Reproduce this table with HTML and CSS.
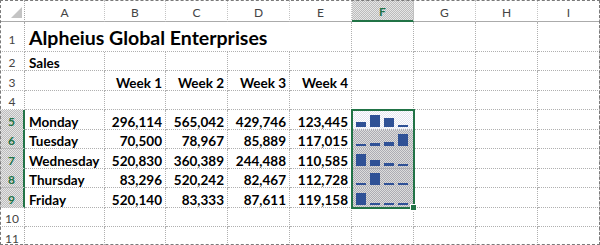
FILE: index.html
```html
<!DOCTYPE html>
<html lang="en">
<head>
  <meta charset="UTF-8">
  <title>Sales - Sparklines</title>
  <link rel="stylesheet" href="styles.css">
</head>
<body>
  <div class="sheet">
    <!-- column headings -->
    <div class="corner">
      <svg width="11" height="11" viewBox="0 0 11 11"><polygon points="11,0 11,11 0,11" fill="#c4c4c4"/></svg>
    </div>
    <div class="col">A</div>
    <div class="col">B</div>
    <div class="col">C</div>
    <div class="col">D</div>
    <div class="col">E</div>
    <div class="col on">F</div>
    <div class="col">G</div>
    <div class="col">H</div>
    <div class="col">I</div>

    <!-- row 1 -->
    <div class="row first">1</div>
    <div class="cell title">Alpheius Global Enterprises</div>
    <div class="cell"></div><div class="cell"></div><div class="cell"></div><div class="cell"></div>

    <!-- row 2 -->
    <div class="row">2</div>
    <div class="cell">Sales</div>
    <div class="cell"></div><div class="cell"></div><div class="cell"></div><div class="cell"></div>
    <div class="cell"></div><div class="cell"></div><div class="cell"></div><div class="cell"></div>

    <!-- row 3 -->
    <div class="row">3</div>
    <div class="cell"></div>
    <div class="cell num">Week 1</div>
    <div class="cell num">Week 2</div>
    <div class="cell num">Week 3</div>
    <div class="cell num">Week 4</div>
    <div class="cell"></div><div class="cell"></div><div class="cell"></div><div class="cell"></div>

    <!-- row 4 -->
    <div class="row">4</div>
    <div class="cell"></div><div class="cell"></div><div class="cell"></div><div class="cell"></div><div class="cell"></div>
    <div class="cell"></div><div class="cell"></div><div class="cell"></div><div class="cell"></div>

    <!-- row 5 -->
    <div class="row on">5</div>
    <div class="cell">Monday</div>
    <div class="cell num">296,114</div>
    <div class="cell num">565,042</div>
    <div class="cell num">429,746</div>
    <div class="cell num">123,445</div>
    <div class="cell spark active">
      <span class="bar" style="height:5px"></span>
      <span class="bar" style="height:12px"></span>
      <span class="bar" style="height:9px"></span>
      <span class="bar" style="height:2px"></span>
      <div class="selection"><div class="handle"></div></div>
    </div>
    <div class="cell"></div><div class="cell"></div><div class="cell"></div>

    <!-- row 6 -->
    <div class="row on">6</div>
    <div class="cell">Tuesday</div>
    <div class="cell num">70,500</div>
    <div class="cell num">78,967</div>
    <div class="cell num">85,889</div>
    <div class="cell num">117,015</div>
    <div class="cell spark">
      <span class="bar" style="height:2px"></span>
      <span class="bar" style="height:3px"></span>
      <span class="bar" style="height:4px"></span>
      <span class="bar" style="height:12px"></span>
    </div>
    <div class="cell"></div><div class="cell"></div><div class="cell"></div>

    <!-- row 7 -->
    <div class="row on">7</div>
    <div class="cell">Wednesday</div>
    <div class="cell num">520,830</div>
    <div class="cell num">360,389</div>
    <div class="cell num">244,488</div>
    <div class="cell num">110,585</div>
    <div class="cell spark">
      <span class="bar" style="height:12px"></span>
      <span class="bar" style="height:6px"></span>
      <span class="bar" style="height:3px"></span>
      <span class="bar" style="height:2px"></span>
    </div>
    <div class="cell"></div><div class="cell"></div><div class="cell"></div>

    <!-- row 8 -->
    <div class="row on">8</div>
    <div class="cell">Thursday</div>
    <div class="cell num">83,296</div>
    <div class="cell num">520,242</div>
    <div class="cell num">82,467</div>
    <div class="cell num">112,728</div>
    <div class="cell spark">
      <span class="bar" style="height:2px"></span>
      <span class="bar" style="height:12px"></span>
      <span class="bar" style="height:2px"></span>
      <span class="bar" style="height:2px"></span>
    </div>
    <div class="cell"></div><div class="cell"></div><div class="cell"></div>

    <!-- row 9 -->
    <div class="row on">9</div>
    <div class="cell">Friday</div>
    <div class="cell num">520,140</div>
    <div class="cell num">83,333</div>
    <div class="cell num">87,611</div>
    <div class="cell num">119,158</div>
    <div class="cell spark">
      <span class="bar" style="height:12px"></span>
      <span class="bar" style="height:2px"></span>
      <span class="bar" style="height:2px"></span>
      <span class="bar" style="height:2px"></span>
    </div>
    <div class="cell"></div><div class="cell"></div><div class="cell"></div>

    <!-- row 10 -->
    <div class="row">10</div>
    <div class="cell"></div><div class="cell"></div><div class="cell"></div><div class="cell"></div><div class="cell"></div>
    <div class="cell"></div><div class="cell"></div><div class="cell"></div><div class="cell"></div>

    <!-- row 11 -->
    <div class="row">11</div>
    <div class="cell"></div><div class="cell"></div><div class="cell"></div><div class="cell"></div><div class="cell"></div>
    <div class="cell"></div><div class="cell"></div><div class="cell"></div><div class="cell"></div>
  </div>
</body>
</html>
```

FILE: styles.css
```css
* {
  box-sizing: border-box;
}

body {
  margin: 0;
  font-family: Lato, "Liberation Sans", sans-serif;
  background-color: white;
}

.sheet {
  display: grid;
  grid-template-columns: 25px 80px 61px 62px 62px 62px 62px 62px 62px 62px;
  grid-template-rows: 22px 30px 19px 20px 19px 20px 19px 20px 19px 20px 19px 20px;
  width: 600px;
  height: 245px;
  overflow: hidden;
  outline: 1px dashed #7a7a7a;
  outline-offset: -1px;
}

/* headings */
.corner {
  display: flex;
  align-items: flex-end;
  justify-content: flex-end;
  padding: 0 2px 3px 0;
  border-right: 1px dotted #a8a8a8;
  border-bottom: 1px solid #ababab;
}

.col {
  display: flex;
  align-items: center;
  justify-content: center;
  padding-top: 3px;
  font-size: 12px;
  color: #444;
  border-right: 1px dotted #c4c4c4;
  border-bottom: 1px solid #ababab;
}

.row {
  display: flex;
  align-items: center;
  justify-content: center;
  padding-top: 3px;
  font-size: 12px;
  color: #444;
  border-right: 1px dotted #a8a8a8;
  border-bottom: 1px dotted #b8b8b8;
}

.row.first {
  padding-top: 6px;
}

.col.on,
.row.on {
  background: repeating-conic-gradient(#bcbcbc 0 25%, #e6e6e6 0 50%) 0 0 / 2px 2px;
  color: #217346;
  font-weight: bold;
}

.col.on {
  border-bottom: 2px solid #217346;
}

.row.on {
  border-right: 2px solid #217346;
}

/* cells */
.cell {
  display: flex;
  align-items: flex-end;
  padding: 0 3px 0 4px;
  font-size: 13.5px;
  font-weight: bold;
  line-height: 1;
  white-space: nowrap;
  color: #000;
  border-right: 1px dotted #b0b0b0;
  border-bottom: 1px dotted #b0b0b0;
}

.num {
  justify-content: flex-end;
}

.title {
  grid-column: span 5;
  padding-bottom: 4px;
  font-size: 19.5px;
}

/* sparklines */
.spark {
  position: relative;
  gap: 4px;
  padding: 0 5px 2px 4px;
  background: repeating-conic-gradient(#acacb4 0 25%, #dcdcdc 0 50%) 0 0 / 2px 2px;
}

.spark.active {
  background: repeating-conic-gradient(#e2e4f0 0 25%, #fff 0 50%) 0 0 / 2px 2px;
}

.bar {
  flex: 1;
  background-color: #2f5196;
}

.selection {
  position: absolute;
  left: -1px;
  top: -1px;
  width: 64px;
  height: 100px;
  border: 2px solid #217346;
  z-index: 2;
}

.handle {
  position: absolute;
  right: -4px;
  bottom: -4px;
  width: 7px;
  height: 7px;
  background-color: #217346;
  border: 1px solid white;
}
```
